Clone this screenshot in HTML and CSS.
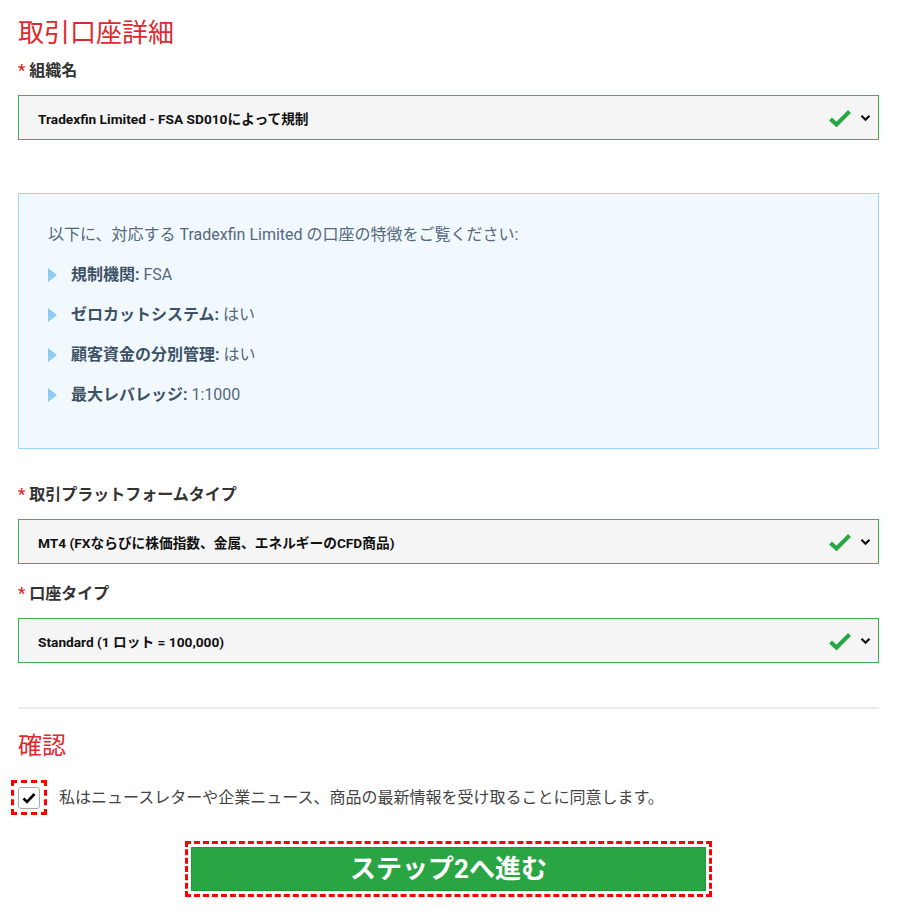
FILE: index.html
```html
<!DOCTYPE html>
<html lang="ja">
<head>
<meta charset="UTF-8">
<link rel="stylesheet" href="styles.css">
</head>
<body>
<div class="page">

<h2 class="title">取引口座詳細</h2>

<div class="field">
  <label class="label"><span class="req">*</span> 組織名</label>
  <div class="select">
    <span class="value">Tradexfin Limited - FSA SD010によって規制</span>
    <svg class="ok" width="22" height="18" viewBox="0 0 22 18"><path d="M1.5 10 L7.5 15.5 L20.5 2.5" fill="none" stroke="#28a745" stroke-width="4.2"/></svg>
    <svg class="arrow" width="11" height="8" viewBox="0 0 11 8"><path d="M1.5 1.8 L5.5 5.8 L9.5 1.8" fill="none" stroke="#111" stroke-width="2.2"/></svg>
  </div>
</div>

<div class="info">
  <p class="intro">以下に、対応する Tradexfin Limited の口座の特徴をご覧ください:</p>
  <ul class="features">
    <li><b>規制機関:</b> FSA</li>
    <li><b>ゼロカットシステム:</b> はい</li>
    <li><b>顧客資金の分別管理:</b> はい</li>
    <li><b>最大レバレッジ:</b> 1:1000</li>
  </ul>
</div>

<div class="field platform">
  <label class="label"><span class="req">*</span> 取引プラットフォームタイプ</label>
  <div class="select">
    <span class="value">MT4 (FXならびに株価指数、金属、エネルギーのCFD商品)</span>
    <svg class="ok" width="22" height="18" viewBox="0 0 22 18"><path d="M1.5 10 L7.5 15.5 L20.5 2.5" fill="none" stroke="#28a745" stroke-width="4.2"/></svg>
    <svg class="arrow" width="11" height="8" viewBox="0 0 11 8"><path d="M1.5 1.8 L5.5 5.8 L9.5 1.8" fill="none" stroke="#111" stroke-width="2.2"/></svg>
  </div>
</div>

<div class="field account">
  <label class="label"><span class="req">*</span> 口座タイプ</label>
  <div class="select">
    <span class="value">Standard (1 ロット = 100,000)</span>
    <svg class="ok" width="22" height="18" viewBox="0 0 22 18"><path d="M1.5 10 L7.5 15.5 L20.5 2.5" fill="none" stroke="#28a745" stroke-width="4.2"/></svg>
    <svg class="arrow" width="11" height="8" viewBox="0 0 11 8"><path d="M1.5 1.8 L5.5 5.8 L9.5 1.8" fill="none" stroke="#111" stroke-width="2.2"/></svg>
  </div>
</div>

<hr class="sep">

<h2 class="title confirm">確認</h2>

<div class="agree">
  <span class="mark">
    <span class="box">
      <svg width="14" height="12" viewBox="0 0 14 12"><path d="M1.5 6.5 L5 10 L12.5 2" fill="none" stroke="#000" stroke-width="2.6"/></svg>
    </span>
  </span>
  <span class="agree-text">私はニュースレターや企業ニュース、商品の最新情報を受け取ることに同意します。</span>
</div>

<div class="actions">
  <span class="mark-btn"><button class="next" type="button">ステップ2へ進む</button></span>
</div>

</div>
</body>
</html>
```

FILE: styles.css
```css
body{margin:0;background:#fff;font-family:Roboto,"Noto Sans CJK JP",sans-serif;color:#333}
.page{width:861px;padding:18px 0 0 18px}
.title{margin:0;font-size:26px;line-height:30px;font-weight:400;color:#dd2a2f}
.field{margin-top:13px}
.label{display:block;font-size:16px;line-height:20px;font-weight:700;color:#333}
.req{color:#e0282e;font-weight:700}
.select{margin-top:14px;height:43px;border:1px solid #3cb054;background:#f5f5f5;display:flex;align-items:center;padding:0 7px 0 19px}
.value{flex:1;font-size:13.7px;font-weight:700;color:#111}
.ok{margin-right:9px}
.info{margin-top:53px;height:254px;box-sizing:content-box;border:1px solid #9fd4f7;background:#f1f9ff;padding:0}
.intro{margin:31px 0 0 29px;font-size:16px;line-height:20px;color:#56687a}
.features{list-style:none;margin:0;padding:0 0 0 29px}
.features li{position:relative;margin-top:20px;padding-left:23px;font-size:16px;line-height:20px;color:#56687a}
.features li:before{content:"";position:absolute;left:0;top:3px;border-left:9px solid #8ccbf2;border-top:7px solid transparent;border-bottom:7px solid transparent}
.features b{color:#3e5266}
.platform{margin-top:36px}
.account{margin-top:20px}
.sep{margin:44px 0 0;border:0;border-top:2px solid #ebebeb}
.confirm{margin-top:23px;font-size:24px;line-height:28px}
.agree{display:flex;align-items:center;margin-top:20px;margin-left:-7px}
.mark{display:flex;align-items:center;justify-content:center;width:30px;height:29px;border:3px dashed #f00}
.box{display:flex;align-items:center;justify-content:center;width:20px;height:20px;border:1px solid #a9a9a9;border-radius:3px;background:#fff}
.agree-text{margin-left:12px;font-size:16px;line-height:20px;color:#444}
.actions{display:flex;justify-content:center;margin-top:26px}
.mark-btn{display:block;padding:3px;border:3px dashed #f00}
.next{display:block;width:515px;height:44px;border:1px solid #1e9a3a;background:#29a643;color:#fff;font-family:Roboto,"Noto Sans CJK JP",sans-serif;font-size:26px;font-weight:700;line-height:40px;padding:0;cursor:pointer}
```
